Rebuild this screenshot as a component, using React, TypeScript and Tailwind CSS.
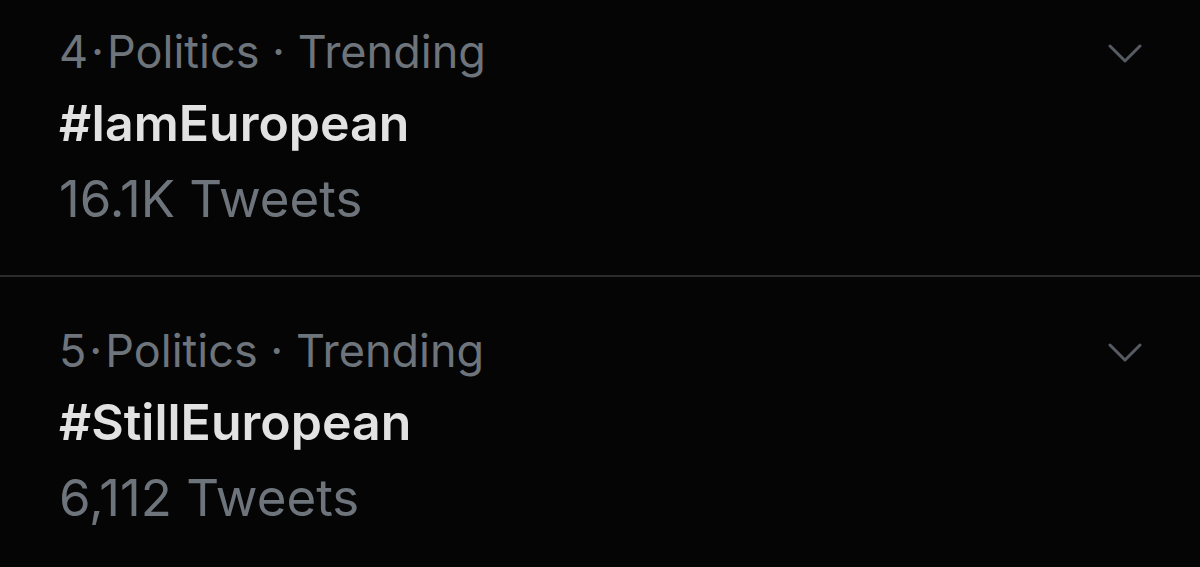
const trends = [
  { rank: 4, topic: "#IamEuropean", count: "16.1K Tweets" },
  { rank: 5, topic: "#StillEuropean", count: "6,112 Tweets" },
];

function Chevron() {
  return (
    <svg width="34" height="20" viewBox="0 0 34 20" fill="none" className="mt-[24px]">
      <path d="M2 2 L17 17 L32 2" stroke="#565b61" strokeWidth="3" strokeLinecap="round" strokeLinejoin="round" />
    </svg>
  );
}

export default function App() {
  return (
    <div
      className="h-[567px] w-[1200px] overflow-hidden bg-[#050505]"
      style={{ fontFamily: "Inter, 'Liberation Sans', sans-serif" }}
    >
      {trends.map((t, i) => (
        <div
          key={t.topic}
          className={
            i === 0
              ? "flex h-[277px] justify-between border-b-2 border-[#2a2c2e] pl-[59px] pr-[58px] pt-[20px]"
              : "flex justify-between pl-[59px] pr-[58px] pt-[42px]"
          }
        >
          <div className="flex flex-col">
            <div className="text-[45px] leading-[64px] text-[#6e747b]">
              {t.rank}
              <span className="mx-[3px]">·</span>Politics · Trending
            </div>
            <div className="text-[50px] leading-[78px] font-semibold text-[#e2e2e2]">
              {t.topic}
            </div>
            <div className="text-[51px] leading-[73px] text-[#6e747b]">
              {t.count}
            </div>
          </div>
          <Chevron />
        </div>
      ))}
    </div>
  );
}
